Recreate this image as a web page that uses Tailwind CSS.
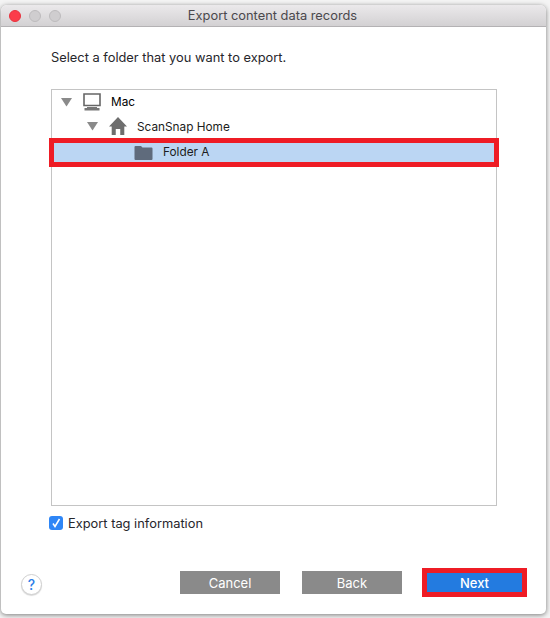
<!DOCTYPE html>
<html lang="en">
<head>
  <meta charset="UTF-8">
  <meta name="viewport" content="width=device-width, initial-scale=1.0">
  <title>Export content data records</title>
  <script src="https://cdn.jsdelivr.net/npm/@tailwindcss/browser@4"></script>
</head>
<body class="w-[550px] h-[618px] overflow-hidden bg-[#f4f4f4] font-['Inter',sans-serif] text-[12.85px] text-[#26262b]">
  <div class="ml-px mt-[5px] w-[545px] h-[609px] flex flex-col bg-white rounded-t-[6px] rounded-b-[5px] shadow-[0_1px_5px_rgba(0,0,0,0.5)]">
    <!-- title bar -->
    <div class="h-[22px] shrink-0 flex items-center relative px-[8px] gap-[8px] rounded-t-[6px] border-b border-[#b4b2b4] bg-gradient-to-b from-[#ebe9eb] to-[#d3d1d3]">
      <span class="w-[12px] h-[12px] rounded-full bg-[#fb3d4a] border border-[#e8323e]"></span>
      <span class="w-[12px] h-[12px] rounded-full bg-[#cfcdcf] border border-[#bdbbbd]"></span>
      <span class="w-[12px] h-[12px] rounded-full bg-[#cfcdcf] border border-[#bdbbbd]"></span>
      <span class="absolute inset-x-0 pr-[2px] text-center text-[#4a484c] leading-[22px]">Export content data records</span>
    </div>

    <div class="pl-[50px] pr-[49px] flex flex-col grow">
      <p class="mt-[22px] h-[18px] leading-[18px] text-[#26262b]">Select a folder that you want to export.</p>

      <!-- tree -->
      <div class="mt-[22px] w-[446px] h-[417px] border border-[#c4c4c4] bg-white text-[11.8px]">
        <div class="h-[24px] flex items-center pl-[9px] text-black">
          <svg class="w-[11px] h-[10px]" viewBox="0 0 11 10"><path d="M0 1h11L5.500 9.500z" fill="#8a8a8a"/></svg>
          <svg class="ml-[10px] w-[20px] h-[18px]" viewBox="0 0 20 18"><path d="M2 1h16v11.500h-16z" fill="none" stroke="#666" stroke-width="1.600"/><path d="M5 14h10v1h2.500v2.500h-15V15H5z" fill="#777"/></svg>
          <span class="ml-[9px] pt-[1px]">Mac</span>
        </div>
        <div class="h-[24px] flex items-center pl-[35px] text-[#1c1c20]">
          <svg class="w-[11px] h-[10px]" viewBox="0 0 11 10"><path d="M0 1h11L5.500 9.500z" fill="#8a8a8a"/></svg>
          <svg class="ml-[11px] w-[18px] h-[18px]" viewBox="0 0 20 18" preserveAspectRatio="none"><path d="M10 0 20 9.500h-3V18h-4.500v-6h-5v6H3V9.500H0z" fill="#6e6e6e"/></svg>
          <span class="ml-[10px] pt-[3px]">ScanSnap Home</span>
        </div>
        <div class="-mx-[3px] h-[29px] border-[5px] border-[#ee1c25] bg-[#bbd6f3] flex items-center pl-[80px] text-[#1c1c20]">
          <svg class="w-[19px] h-[14px]" viewBox="0 0 19 14"><path d="M1.500 0h5.500l1.500 1.500h9a1 1 0 0 1 1 1V13a1 1 0 0 1-1 1h-16a1 1 0 0 1-1-1V1a1 1 0 0 1 1-1z" fill="#5f6b7c"/></svg>
          <span class="ml-[10px]">Folder A</span>
        </div>
      </div>

      <label class="mt-[10px] -ml-[2px] h-[14px] flex items-center gap-[5px]">
        <span class="w-[14px] h-[14px] rounded-[3px] bg-[#2e86f6] flex items-center justify-center">
          <svg class="w-[10px] h-[10px]" viewBox="0 0 10 10"><path d="M2 5.500 4 8.500 8.500 1" fill="none" stroke="#fff" stroke-width="1.500"/></svg>
        </span>
        <span class="text-[#26262b] pt-[2px]">Export tag information</span>
      </label>
    </div>

    <!-- footer -->
    <div class="h-[41px] shrink-0 mb-[11px] flex items-center pl-[20px] pr-[19px] text-white text-[13px]">
      <span class="w-[21px] h-[21px] mt-[4px] rounded-full bg-white border border-[#d0d0d0] shadow-[0_1px_1px_rgba(0,0,0,0.15)] flex items-center justify-center text-[#2e7fe8] text-[14px] font-medium">?</span>
      <button class="ml-[138px] w-[100px] h-[23px] pt-[2px] bg-[#8a8a8a]">Cancel</button>
      <button class="ml-[22px] w-[100px] h-[23px] pt-[2px] bg-[#8a8a8a]">Back</button>
      <button class="ml-[20px] w-[105px] h-[29px] pt-[1px] border-[5px] border-[#ee1c25] bg-[#237be0] font-medium">Next</button>
    </div>
  </div>
</body>
</html>
